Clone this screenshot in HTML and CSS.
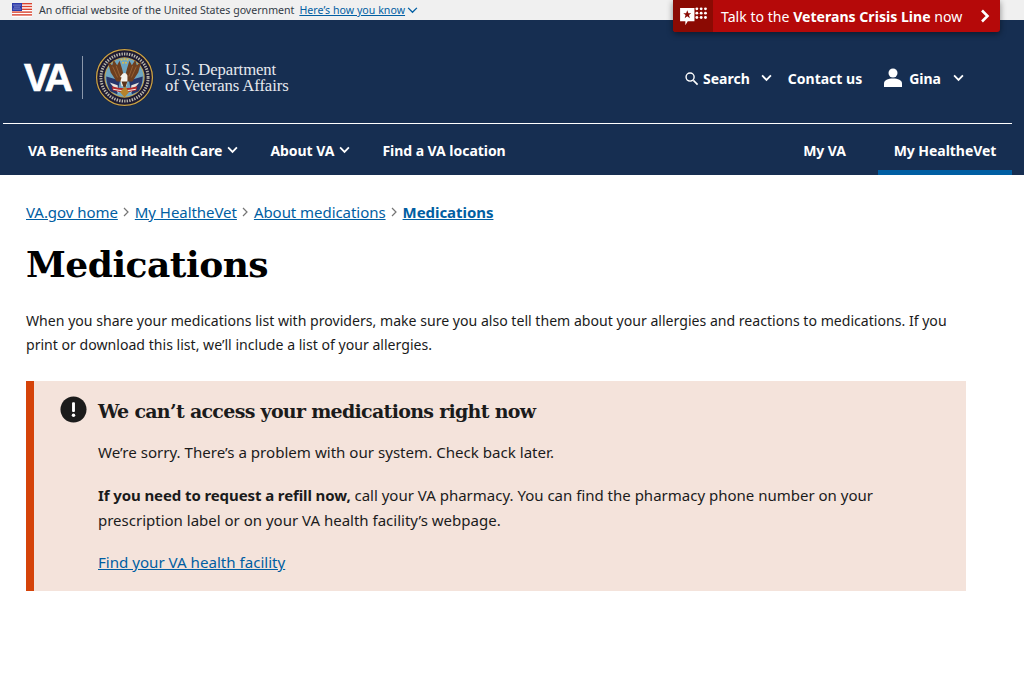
FILE: index.html
```html
<!DOCTYPE html>
<html lang="en">
<head>
<meta charset="utf-8">
<title>Medications</title>
<link rel="stylesheet" href="styles.css">
</head>
<body>
<div class="gov-banner">
  <svg class="flag" viewBox="0 0 20 14" width="20" height="14"><rect width="20" height="14" fill="#fff"/><g fill="#d9432f"><rect width="20" height="1.4"/><rect y="2.8" width="20" height="1.4"/><rect y="5.6" width="20" height="1.4"/><rect y="8.4" width="20" height="1.4"/><rect y="11.2" width="20" height="1.4"/></g><rect width="10" height="8" fill="#2c3aa8"/><g fill="#fff"><circle cx="2" cy="2" r=".5"/><circle cx="4" cy="2" r=".5"/><circle cx="6" cy="2" r=".5"/><circle cx="8" cy="2" r=".5"/><circle cx="3" cy="4" r=".5"/><circle cx="5" cy="4" r=".5"/><circle cx="7" cy="4" r=".5"/><circle cx="2" cy="6" r=".5"/><circle cx="4" cy="6" r=".5"/><circle cx="6" cy="6" r=".5"/><circle cx="8" cy="6" r=".5"/></g></svg>
  <span class="gov-text">An official website of the United States government</span>
  <a class="gov-link" href="#">Here’s how you know</a>
  <svg class="gov-chev" viewBox="0 0 12 8" width="11" height="7"><path d="M1 1l5 5 5-5" fill="none" stroke="#005ea2" stroke-width="1.5"/></svg>
</div>
<a class="crisis" href="#">
  <span class="crisis-icon">
    <svg viewBox="0 0 30 24" width="29" height="23"><path d="M1 3h15v14H9l-2.500 4V17H1z" fill="#fff"/><path d="M8.500 5.500l1.200 3h3l-2.400 2 .9 3.200-2.700-1.900-2.700 1.900.9-3.200-2.400-2h3z" fill="#8b0a03"/><g fill="#fff"><circle cx="18.500" cy="4" r="1.500"/><circle cx="23" cy="4" r="1.500"/><circle cx="27.500" cy="4" r="1.500"/><circle cx="18.500" cy="8.500" r="1.500"/><circle cx="23" cy="8.500" r="1.500"/><circle cx="27.500" cy="8.500" r="1.500"/><circle cx="18.500" cy="13" r="1.500"/><circle cx="23" cy="13" r="1.500"/><circle cx="27.500" cy="13" r="1.500"/></g></svg>
  </span>
  <span class="crisis-text">Talk to the <b>Veterans Crisis Line</b> now</span>
  <svg class="crisis-chev" viewBox="0 0 10 14" width="10" height="14"><path d="M2 1.500l5.500 5.500L2 12.500" fill="none" stroke="#fff" stroke-width="2.600"/></svg>
</a>
<header class="site-header">
  <div class="masthead">
    <div class="logo">
      <span class="va-mark">VA</span>
      <span class="logo-rule"></span>
      <svg class="seal" viewBox="0 0 60 60" width="59" height="59">
        <circle cx="30" cy="30" r="29.500" fill="#1d1a33"/>
        <circle cx="30" cy="30" r="28.400" fill="none" stroke="#c9a445" stroke-width="1.300"/>
        <circle cx="30" cy="30" r="24" fill="none" stroke="#b9b7ab" stroke-width="3" stroke-dasharray="1.400 1.200"/>
        <circle cx="30" cy="30" r="20.500" fill="#c4a24b"/>
        <circle cx="30" cy="30" r="19.500" fill="#6ea6c2"/>
        <path d="M11.500 29l14 4-3 14-7-3q-4-7-4-15z" fill="#26356a"/>
        <path d="M48.500 29l-14 4 3 14 7-3q4-7 4-15z" fill="#26356a"/>
        <path d="M23 38l-8-3 9 11zM37 38l8-3-9 11z" fill="#e8e4de"/>
        <path d="M18 43q12 4 24 0l1-4q-13 4-26 0z" fill="#b52a2a"/>
        <path d="M18.500 41.500q11.500 3 23 0v1q-11.500 3-23 0z" fill="#f1ece4"/>
        <path d="M29 34h-7l-6-9-3-11 4.500 3.500L19 12l3.500 5.500L25 13l2.500 8 1.500 6z" fill="#6e3f1f"/>
        <path d="M31 34h7l6-9 3-11-4.500 3.500L41 12l-3.500 5.500L35 13l-2.500 8-1.500 6z" fill="#6e3f1f"/>
        <path d="M18 19l5 11M21.500 18l4 11M42 19l-5 11M38.500 18l-4 11" stroke="#a0693a" stroke-width=".8" fill="none"/>
        <path d="M26 33l1-3-1.500-.5 1.500-2q1-2 3-2t3 2.500v5l-1 6h-5z" fill="#f6f3ec"/>
        <path d="M27 34l2 6h2l2-6z" fill="#5c3419"/>
        <path d="M25.500 45l4-5h2l3 5-4.500 5z" fill="#b7832b"/>
        <g fill="#e3bd45"><circle cx="30" cy="11.500" r="1"/><circle cx="27" cy="12" r="1"/><circle cx="33" cy="12" r="1"/><circle cx="28.500" cy="15" r="1"/><circle cx="31.500" cy="15" r="1"/></g>
      </svg>
      <span class="dept">U.S. Department<br>of Veterans Affairs</span>
    </div>
    <nav class="utility">
      <a class="util-item search" href="#">
        <svg viewBox="0 0 16 16" width="15" height="15"><circle cx="6.500" cy="6.500" r="4.300" fill="none" stroke="#fff" stroke-width="1.500"/><path d="M10 10l4.500 4.500" stroke="#fff" stroke-width="1.700"/></svg>
        <span>Search</span>
        <svg class="chev util-chev" viewBox="0 0 12 8" width="11" height="8"><path d="M1.200 1.200L6 6l4.800-4.800" fill="none" stroke="#fff" stroke-width="2"/></svg>
      </a>
      <a class="util-item" href="#">Contact us</a>
      <a class="util-item user" href="#">
        <svg viewBox="0 0 20 20" width="20" height="20"><circle cx="10" cy="5" r="4.500" fill="#fff"/><path d="M1 19v-3.500C1 12 5 10.500 10 10.500s9 1.500 9 5V19z" fill="#fff"/></svg>
        <span>Gina</span>
        <svg class="chev util-chev" viewBox="0 0 12 8" width="11" height="8"><path d="M1.200 1.200L6 6l4.800-4.800" fill="none" stroke="#fff" stroke-width="2"/></svg>
      </a>
    </nav>
  </div>
  <nav class="main-nav">
    <div class="nav-left">
      <a class="nav-item" href="#">VA Benefits and Health Care <svg viewBox="0 0 12 8" width="11" height="8"><path d="M1.200 1.200L6 6l4.800-4.800" fill="none" stroke="#fff" stroke-width="2"/></svg></a>
      <a class="nav-item" href="#">About VA <svg viewBox="0 0 12 8" width="11" height="8"><path d="M1.200 1.200L6 6l4.800-4.800" fill="none" stroke="#fff" stroke-width="2"/></svg></a>
      <a class="nav-item" href="#">Find a VA location</a>
    </div>
    <div class="nav-right">
      <a class="nav-tab" href="#">My VA</a>
      <a class="nav-tab active" href="#">My HealtheVet</a>
    </div>
  </nav>
</header>
<main class="content">
  <nav class="crumbs">
    <a href="#">VA.gov home</a><span class="sep"><svg viewBox="0 0 6 10" width="6" height="10"><path d="M1 1l4 4-4 4" fill="none" stroke="#757575" stroke-width="1.200"/></svg></span>
    <a href="#">My HealtheVet</a><span class="sep"><svg viewBox="0 0 6 10" width="6" height="10"><path d="M1 1l4 4-4 4" fill="none" stroke="#757575" stroke-width="1.200"/></svg></span>
    <a href="#">About medications</a><span class="sep"><svg viewBox="0 0 6 10" width="6" height="10"><path d="M1 1l4 4-4 4" fill="none" stroke="#757575" stroke-width="1.200"/></svg></span>
    <a class="current" href="#">Medications</a>
  </nav>
  <h1>Medications</h1>
  <p class="intro">When you share your medications list with providers, make sure you also tell them about your allergies and reactions to medications. If you print or download this list, we’ll include a list of your allergies.</p>
  <section class="alert">
    <svg class="alert-icon" viewBox="0 0 28 28" width="27" height="27"><circle cx="14" cy="14" r="13.500" fill="#1b1b1b"/><rect x="12.500" y="6.500" width="3" height="10" rx="1" fill="#fff"/><circle cx="14" cy="20" r="1.800" fill="#fff"/></svg>
    <div class="alert-body">
      <h2>We can’t access your medications right now</h2>
      <p>We’re sorry. There’s a problem with our system. Check back later.</p>
      <p class="refill"><b>If you need to request a refill now,</b> call your VA pharmacy. You can find the pharmacy phone number on your prescription label or on your VA health facility’s webpage.</p>
      <p class="last"><a href="#">Find your VA health facility</a></p>
    </div>
  </section>
</main>
</body>
</html>
```
FILE: styles.css
```css
* { box-sizing: border-box; }
html, body { margin: 0; padding: 0; }
body {
  font-family: "Noto Sans", Lato, sans-serif;
  color: #1b1b1b;
  background: #fff;
  position: relative;
  height: 683px;
  overflow: hidden;
}
a { color: inherit; text-decoration: none; }

.gov-banner {
  height: 20px;
  background: #f0f0f0;
  display: flex;
  align-items: center;
  padding-left: 12px;
  font-size: 10.600px;
  color: #323a45;
}
.flag { margin-right: 7px; }
.gov-text { margin-right: 5px; }
.gov-link { color: #005ea2; text-decoration: underline; letter-spacing: .04px; }
.gov-chev { margin-left: 2px; }

.crisis {
  position: absolute;
  left: 673px;
  top: 0;
  width: 327px;
  height: 32px;
  background: #b50909;
  color: #fff;
  border-radius: 0 0 3px 3px;
  box-shadow: 0 2px 6px rgba(0,0,0,.45);
  display: flex;
  align-items: center;
  font-size: 14.100px;
  overflow: hidden;
}
.crisis-icon {
  width: 40px;
  height: 32px;
  background: #8b0a03;
  display: flex;
  align-items: center;
  justify-content: center;
  margin-right: 8px;
}
.crisis-text { flex: 1; }
.crisis-text b { font-weight: 700; }
.crisis-chev { margin-right: 10px; }

.site-header { background: #162e51; color: #fff; height: 155px; padding: 0 12px 0 3px; }
.masthead {
  height: 104px;
  border-bottom: 1px solid #fff;
  display: flex;
  align-items: center;
  justify-content: space-between;
}
.logo { display: flex; align-items: center; padding: 12px 0 0 21px; }
.va-mark { font-family: "Liberation Sans", sans-serif; font-weight: 700; font-size: 39px; letter-spacing: -2.500px; width: 48px; -webkit-text-stroke: .7px #fff; }
.logo-rule { width: 1px; height: 43px; background: #8b98ab; margin: 0 12px 0 10px; }
.seal { margin-right: 11px; }
.dept { font-family: "Liberation Serif", serif; font-size: 16.700px; line-height: 15.500px; color: #e6e9ee; letter-spacing: -.1px; }

.utility { display: flex; align-items: center; font-size: 14px; font-weight: 700; padding-top: 13px; padding-right: 48px; }
.util-item { display: flex; align-items: center; }
.search { gap: 4px; margin-right: 16px; }
.util-chev { margin-left: 7px; }
.user { gap: 6px; margin-left: 21px; }
.user .util-chev { margin-left: 6px; }

.main-nav { height: 51px; display: flex; justify-content: space-between; font-size: 14px; font-weight: 700; letter-spacing: -.04px; }
.nav-left { display: flex; align-items: center; padding: 1px 0 0 25px; gap: 32px; }
.nav-item { display: flex; align-items: center; gap: 5px; }
.nav-right { display: flex; }
.nav-tab { display: flex; align-items: center; padding: 1px 16px 0; }
.nav-tab.active { width: 134px; justify-content: center; padding: 6px 0 0; border-bottom: 5px solid #005ea2; margin-left: 16px; }

.content { padding: 0 58px 0 26px; }
.crumbs { display: flex; align-items: center; padding-top: 26px; font-size: 15px; letter-spacing: -.05px; color: #005ea2; height: 48px; }
.crumbs a { text-decoration: underline; }
.crumbs .current { font-weight: 700; }
.sep { display: inline-flex; margin: 0 5.500px; }

h1 { font-family: "DejaVu Serif", serif; font-weight: 700; font-size: 36px; line-height: 46px; margin: 18px 0 22px; letter-spacing: -.5px; color: #000; }
.intro { font-size: 14.100px; line-height: 24px; margin: 0 0 24px; }

.alert {
  width: 940px;
  background: #f4e3db;
  border-left: 8px solid #d54309;
  padding: 16px 32px 16px 26px;
  display: flex;
  gap: 11px;
  height: 210px;
}
.alert-icon { flex: none; margin-top: -1px; }
.alert-body { flex: 1; }
h2 { font-family: "DejaVu Serif", serif; font-weight: 700; font-size: 19px; line-height: 28px; margin: 0 0 15px; letter-spacing: -.7px; }
.alert-body p { font-size: 15.100px; line-height: 25px; margin: 0 0 18px; }
.alert-body p.refill { margin-bottom: 17px; font-size: 15px; }
.alert-body p b { letter-spacing: -.1px; }
.alert-body p.last { margin: 0; }
.alert-body a { color: #005ea2; text-decoration: underline; }
```
